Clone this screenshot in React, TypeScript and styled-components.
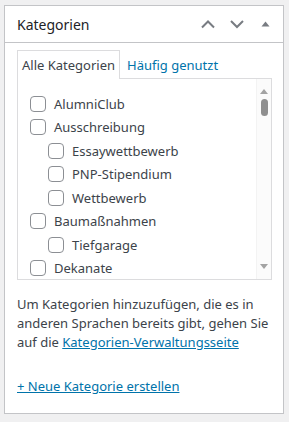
import React from "react";
import styled, { createGlobalStyle } from "styled-components";

const Global = createGlobalStyle`
  html, body { margin: 0; padding: 0; background: #f0f0f1; }
  body { font-family: "Noto Sans", "Open Sans", sans-serif; color: #3c434a; }
  * { box-sizing: border-box; }
`;

const Page = styled.div`
  padding: 5px 6px 0 4px;
  width: 289px;
  height: 422px;
`;

const Panel = styled.div`
  background: #fff;
  border: 1px solid #c3c4c7;
  width: 280px;
  height: 409px;
  display: flex;
  flex-direction: column;
`;

const Header = styled.div`
  height: 37px;
  border-bottom: 1px solid #c3c4c7;
  display: flex;
  align-items: center;
  padding: 0 3px 0 12px;
`;

const Title = styled.h2`
  margin: 0;
  flex: 1;
  font-size: 14px;
  font-weight: 400;
  color: #1d2327;
  line-height: 1;
  padding-top: 2px;
`;

const IconButton = styled.button`
  width: 29px;
  height: 36px;
  border: 0;
  background: none;
  padding: 0;
  display: flex;
  align-items: center;
  justify-content: center;
  color: #787c82;
`;

const Body = styled.div`
  padding: 8px 12px 0 12px;
  display: flex;
  flex-direction: column;
`;

const Tabs = styled.div`
  display: flex;
  align-items: flex-end;
  height: 28px;
  margin-bottom: -1px;
  position: relative;
  z-index: 1;
`;

const Tab = styled.div<{ $active?: boolean }>`
  height: 29px;
  padding: 5px 4px 0 4px;
  font-size: 13px;
  line-height: 18px;
  color: ${(p) => (p.$active ? "#3c434a" : "#0073aa")};
  background: ${(p) => (p.$active ? "#fff" : "transparent")};
  border: 1px solid ${(p) => (p.$active ? "#dcdcde" : "transparent")};
  border-bottom: 0;
  margin-right: ${(p) => (p.$active ? "2px" : "0")};
`;

const ListBox = styled.div`
  border: 1px solid #dcdcde;
  height: 202px;
  width: 255px;
  display: flex;
  overflow: hidden;
`;

const List = styled.ul`
  list-style: none;
  margin: 0;
  padding: 13px 0 0 12px;
  flex: 1;
`;

const Item = styled.li<{ $level: number }>`
  height: 23.5px;
  display: flex;
  align-items: center;
  gap: 8px;
  padding-left: ${(p) => p.$level * 18}px;
  font-size: 13px;
  color: #3c434a;
`;

const Box = styled.span`
  width: 16px;
  height: 16px;
  border: 1px solid #8c8f94;
  border-radius: 4px;
  background: #fff;
  flex: none;
`;

const Scrollbar = styled.div`
  width: 15px;
  display: flex;
  flex-direction: column;
  align-items: center;
  background: #fbfbfb;
  border-left: 1px solid #f3f3f3;
  padding: 10px 0 10px 0;
`;

const Thumb = styled.div`
  width: 7px;
  height: 17px;
  border-radius: 4px;
  background: #8f8f8f;
  margin-top: 5px;
`;

const Spacer = styled.div`
  flex: 1;
`;

const Note = styled.p`
  margin: 15px 0 0 0;
  font-size: 13px;
  line-height: 19px;
  color: #3c434a;
`;

const Link = styled.a`
  color: #0073aa;
  text-decoration: underline;
`;

const AddLink = styled.a`
  display: block;
  margin-top: 25px;
  font-size: 13px;
  line-height: 19px;
  color: #0073aa;
  text-decoration: underline;
`;

const items: [string, number][] = [
  ["AlumniClub", 0],
  ["Ausschreibung", 0],
  ["Essaywettbewerb", 1],
  ["PNP-Stipendium", 1],
  ["Wettbewerb", 1],
  ["Baumaßnahmen", 0],
  ["Tiefgarage", 1],
  ["Dekanate", 0],
];

const Chevron = ({ up }: { up?: boolean }) => (
  <svg width="16" height="10" viewBox="0 0 16 10">
    <path
      d={up ? "M2 8.5 L8 2.5 L14 8.5" : "M2 2 L8 8 L14 2"}
      fill="none"
      stroke="currentColor"
      strokeWidth="2"
    />
  </svg>
);

export default function App() {
  return (
    <>
      <Global />
      <Page>
        <Panel>
          <Header>
            <Title>Kategorien</Title>
            <IconButton aria-label="up">
              <Chevron up />
            </IconButton>
            <IconButton aria-label="down">
              <Chevron />
            </IconButton>
            <IconButton aria-label="toggle">
              <svg width="9" height="6" viewBox="0 0 9 6">
                <path d="M0.5 5.5 L4.5 0.5 L8.5 5.5 Z" fill="currentColor" />
              </svg>
            </IconButton>
          </Header>
          <Body>
            <Tabs>
              <Tab $active>Alle Kategorien</Tab>
              <Tab>Häufig genutzt</Tab>
            </Tabs>
            <ListBox>
              <List>
                {items.map(([name, lvl]) => (
                  <Item key={name} $level={lvl}>
                    <Box />
                    {name}
                  </Item>
                ))}
              </List>
              <Scrollbar>
                <svg width="8" height="5" viewBox="0 0 8 5">
                  <path d="M0 5 L4 0 L8 5 Z" fill="#a3a3a3" />
                </svg>
                <Thumb />
                <Spacer />
                <svg width="8" height="5" viewBox="0 0 8 5">
                  <path d="M0 0 L4 5 L8 0 Z" fill="#a3a3a3" />
                </svg>
              </Scrollbar>
            </ListBox>
            <Note>
              Um Kategorien hinzuzufügen, die es in anderen Sprachen bereits
              gibt, gehen Sie auf die{" "}
              <Link href="#">Kategorien-Verwaltungsseite</Link>
            </Note>
            <AddLink href="#">+ Neue Kategorie erstellen</AddLink>
          </Body>
        </Panel>
      </Page>
    </>
  );
}
